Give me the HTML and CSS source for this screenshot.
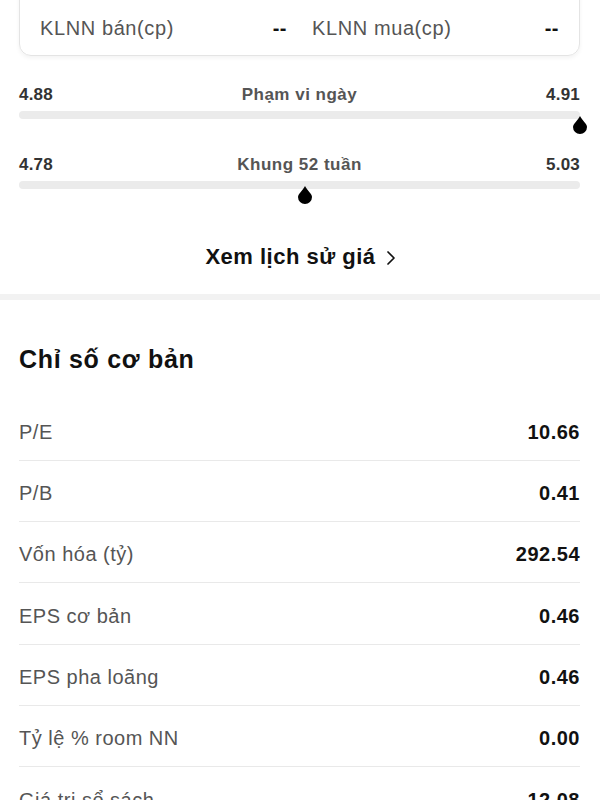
FILE: index.html
```html
<!DOCTYPE html>
<html lang="vi">
<head>
<meta charset="utf-8">
<link rel="stylesheet" href="styles.css">
</head>
<body>
<div class="page">
  <div class="top">
    <div class="card">
      <div class="kv"><span class="k">KLNN bán(cp)</span><span class="v">--</span></div>
      <div class="kv"><span class="k">KLNN mua(cp)</span><span class="v">--</span></div>
    </div>

    <div class="range">
      <div class="range-head"><span class="num">4.88</span><span class="rlabel">Phạm vi ngày</span><span class="num">4.91</span></div>
      <div class="bar">
        <svg class="thumb" style="left:100%" viewBox="0 0 14 18" width="14" height="18"><path d="M7 0 C5 4 0 8 0 11 A7 7 0 0 0 14 11 C14 8 9 4 7 0 Z" fill="#000"/></svg>
      </div>
    </div>

    <div class="range">
      <div class="range-head"><span class="num">4.78</span><span class="rlabel">Khung 52 tuần</span><span class="num">5.03</span></div>
      <div class="bar">
        <svg class="thumb" style="left:51%" viewBox="0 0 14 18" width="14" height="18"><path d="M7 0 C5 4 0 8 0 11 A7 7 0 0 0 14 11 C14 8 9 4 7 0 Z" fill="#000"/></svg>
      </div>
    </div>

    <div class="link">
      <span>Xem lịch sử giá</span>
      <svg class="chev" viewBox="0 0 10 16" width="10" height="16"><polyline points="2,2 8,8 2,14" fill="none" stroke="#111" stroke-width="1.7" stroke-linecap="round" stroke-linejoin="round"/></svg>
    </div>
  </div>

  <div class="sep"></div>

  <div class="basic">
    <h2 class="title">Chỉ số cơ bản</h2>
    <div class="rows">
      <div class="row"><span class="label">P/E</span><span class="val">10.66</span></div>
      <div class="row"><span class="label">P/B</span><span class="val">0.41</span></div>
      <div class="row"><span class="label">Vốn hóa (tỷ)</span><span class="val">292.54</span></div>
      <div class="row"><span class="label">EPS cơ bản</span><span class="val">0.46</span></div>
      <div class="row"><span class="label">EPS pha loãng</span><span class="val">0.46</span></div>
      <div class="row"><span class="label">Tỷ lệ % room NN</span><span class="val">0.00</span></div>
      <div class="row"><span class="label">Giá trị sổ sách</span><span class="val">12.08</span></div>
    </div>
  </div>
</div>
</body>
</html>
```

FILE: styles.css
```css
* { box-sizing: border-box; }
html, body { margin: 0; padding: 0; background: #fff; }
body {
  font-family: "Liberation Sans", Arial, sans-serif;
  color: #111;
  overflow: hidden;
  height: 800px;
}
.page { width: 600px; }
.top { padding: 0 20px 0 19px; }

.card {
  margin-top: -20px;
  border: 1px solid #e4e4e4;
  border-radius: 12px;
  box-shadow: 0 2px 4px rgba(0,0,0,0.05);
  padding: 35px 20px 15px 20px;
  display: grid;
  grid-template-columns: 1fr 1fr;
  column-gap: 25px;
}
.kv {
  display: flex;
  justify-content: space-between;
  align-items: center;
  line-height: 24px;
}
.k { font-size: 20px; color: #555; letter-spacing: 0.6px; }
.v { font-size: 20px; font-weight: bold; color: #111; letter-spacing: 0.5px; }

.range { margin-top: 36px; }
.card + .range { margin-top: 29px; }
.range-head {
  display: flex;
  justify-content: space-between;
  align-items: center;
  line-height: 20px;
  height: 20px;
}
.num { font-size: 17px; font-weight: bold; color: #333; letter-spacing: 0.2px; }
.rlabel { font-size: 17px; font-weight: bold; color: #555; letter-spacing: 0.5px; }
.bar {
  position: relative;
  margin-top: 6px;
  height: 8px;
  border-radius: 4px;
  background: #ebebeb;
}
.thumb {
  position: absolute;
  top: 5px;
  transform: translateX(-50%);
  display: block;
}

.link {
  margin-top: 56px;
  display: flex;
  justify-content: center;
  align-items: center;
  gap: 10px;
  line-height: 24px;
  font-size: 22px;
  font-weight: bold;
  letter-spacing: 0.5px;
  color: #111;
  padding-bottom: 25px;
  padding-left: 2px;
}
.chev { display: block; margin-top: 1px; }

.sep { height: 6px; background: #f2f2f2; }

.basic { padding: 44px 20px 0 19px; }
.title {
  margin: 0;
  font-size: 25px;
  line-height: 30px;
  font-weight: bold;
  letter-spacing: 0.7px;
  color: #111;
}
.rows { margin-top: 25.5px; }
.row {
  display: flex;
  justify-content: space-between;
  align-items: center;
  padding: 20.33px 0 16px 0;
  line-height: 24px;
  border-bottom: 1px solid #e9e9e9;
}
.label { font-size: 20px; color: #555; letter-spacing: 0.5px; }
.val { font-size: 20px; font-weight: bold; color: #111; letter-spacing: 0.5px; }
```
